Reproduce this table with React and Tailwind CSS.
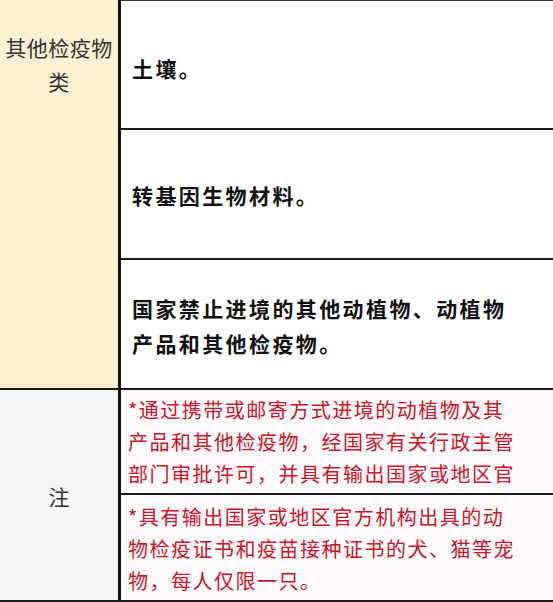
export default function App() {
  const cjk = { fontFamily: '"Noto Sans CJK SC", "Noto Sans", sans-serif' }

  return (
    <div className="w-[553px] h-[602px] overflow-hidden bg-white flex flex-col" style={cjk}>
      {/* 其他检疫物类 */}
      <div className="flex h-[390px] border-b-2 border-[#1a1a1a]">
        <div className="w-[121px] shrink-0 bg-[#fcf0d3] border-r-[3px] border-[#111] pt-[30px] text-center text-[21px] leading-[34px] tracking-[0.5px] text-[#333]">
          其他检疫物
          <br />
          类
        </div>
        <div className="flex-1 flex flex-col border-t border-[#333]">
          <div className="h-[129px] flex items-center pl-[11px] pt-[8px] border-b-2 border-[#1a1a1a] text-[21px] font-bold tracking-[2.4px] text-[#111]">
            土壤。
          </div>
          <div className="h-[130px] flex items-center pl-[11px] pt-[4px] border-b-2 border-[#1a1a1a] text-[21px] font-bold tracking-[2.4px] text-[#111]">
            转基因生物材料。
          </div>
          <div className="flex-1 flex items-center pl-[11px] pt-[4px] text-[21px] leading-[35px] font-bold tracking-[2.4px] text-[#111]">
            <p>
              国家禁止进境的其他动植物、动植物
              <br />
              产品和其他检疫物。
            </p>
          </div>
        </div>
      </div>

      {/* 注 */}
      <div className="flex flex-1 border-b-2 border-[#1a1a1a]">
        <div className="w-[121px] shrink-0 bg-[#f6f6f6] border-r-[3px] border-[#111] flex items-center justify-center pt-[4px] text-[21px] text-[#333]">
          注
        </div>
        <div className="flex-1 flex flex-col text-[20px] leading-[32px] tracking-[1.5px] text-[#c8142c]">
          <div className="h-[105px] pl-[7px] pt-[4px] border-b-2 border-[#1a1a1a] bg-[#fffafa]">
            *通过携带或邮寄方式进境的动植物及其
            <br />
            产品和其他检疫物，经国家有关行政主管
            <br />
            部门审批许可，并具有输出国家或地区官
          </div>
          <div className="flex-1 pl-[7px] pt-[6px] bg-[#fffafa]">
            *具有输出国家或地区官方机构出具的动
            <br />
            物检疫证书和疫苗接种证书的犬、猫等宠
            <br />
            物，每人仅限一只。
          </div>
        </div>
      </div>
    </div>
  )
}
